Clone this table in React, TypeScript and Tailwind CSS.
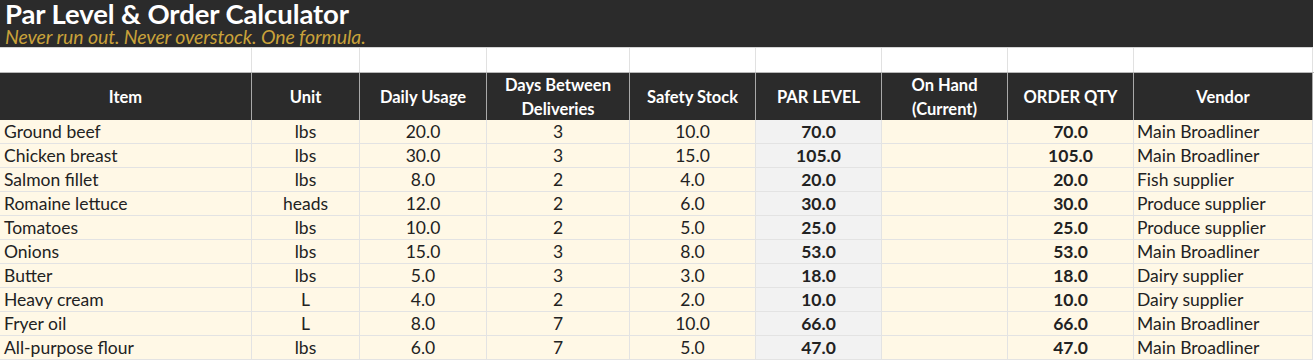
import React from 'react';

const cols = 'grid grid-cols-[252px_108px_127px_143px_126px_126px_126px_126px_179px]';

const headers = [
  'Item',
  'Unit',
  'Daily Usage',
  'Days Between Deliveries',
  'Safety Stock',
  'PAR LEVEL',
  'On Hand (Current)',
  'ORDER QTY',
  'Vendor',
];

const rows = [
  ['Ground beef', 'lbs', '20.0', '3', '10.0', '70.0', '70.0', 'Main Broadliner'],
  ['Chicken breast', 'lbs', '30.0', '3', '15.0', '105.0', '105.0', 'Main Broadliner'],
  ['Salmon fillet', 'lbs', '8.0', '2', '4.0', '20.0', '20.0', 'Fish supplier'],
  ['Romaine lettuce', 'heads', '12.0', '2', '6.0', '30.0', '30.0', 'Produce supplier'],
  ['Tomatoes', 'lbs', '10.0', '2', '5.0', '25.0', '25.0', 'Produce supplier'],
  ['Onions', 'lbs', '15.0', '3', '8.0', '53.0', '53.0', 'Main Broadliner'],
  ['Butter', 'lbs', '5.0', '3', '3.0', '18.0', '18.0', 'Dairy supplier'],
  ['Heavy cream', 'L', '4.0', '2', '2.0', '10.0', '10.0', 'Dairy supplier'],
  ['Fryer oil', 'L', '8.0', '7', '10.0', '66.0', '66.0', 'Main Broadliner'],
  ['All-purpose flour', 'lbs', '6.0', '7', '5.0', '47.0', '47.0', 'Main Broadliner'],
];

export default function App() {
  return (
    <div className="w-[1314px] h-[360px] overflow-hidden bg-white font-['Lato','Open_Sans',sans-serif] text-[#222]">
      {/* Title band */}
      <div className="w-[1313px] h-[48px] bg-[#2b2b2b] border-b border-[#d4d4d4] pl-[5px] pt-[1px] flex flex-col">
        <div className="text-white font-bold text-[27.5px] leading-[26px] tracking-[-0.1px]">
          Par Level &amp; Order Calculator
        </div>
        <div className="text-[#c9a23a] italic text-[19.5px] leading-[20px] tracking-[-0.1px]">
          Never run out. Never overstock. One formula.
        </div>
      </div>

      {/* Spacer row */}
      <div className={`${cols} h-[24px]`}>
        {headers.map((h) => (
          <div key={h} className="border-r border-[#e1e1e1] bg-white" />
        ))}
      </div>

      {/* Header row */}
      <div className={`${cols} h-[48px] border-t border-[#b8b8b8]`}>
        {headers.map((h) => (
          <div
            key={h}
            className="bg-[#2b2b2b] border-r border-b-2 border-[#a9a9a9] flex items-center justify-center text-center text-white font-bold text-[16.5px] leading-[24px] px-3"
          >
            {h}
          </div>
        ))}
      </div>

      {/* Data rows */}
      {rows.map((r) => (
        <div key={r[0]} className={`${cols} h-[24px] text-[17.5px] leading-[23px]`}>
          <div className="bg-[#fff8e6] border-r border-b border-[#e3e3e3] pl-[4px]">{r[0]}</div>
          <div className="bg-[#fff8e6] border-r border-b border-[#e3e3e3] text-center">{r[1]}</div>
          <div className="bg-[#fff8e6] border-r border-b border-[#e3e3e3] text-center">{r[2]}</div>
          <div className="bg-[#fff8e6] border-r border-b border-[#e3e3e3] text-center">{r[3]}</div>
          <div className="bg-[#fff8e6] border-r border-b border-[#e3e3e3] text-center">{r[4]}</div>
          <div className="bg-[#f2f2f2] border-r border-b border-[#e3e3e3] text-center font-bold">{r[5]}</div>
          <div className="bg-[#fff8e6] border-r border-b border-[#e3e3e3]" />
          <div className="bg-[#fff8e6] border-r border-b border-[#e3e3e3] text-center font-bold">{r[6]}</div>
          <div className="bg-[#fff8e6] border-r border-b border-[#e3e3e3] pl-[3px]">{r[7]}</div>
        </div>
      ))}
    </div>
  );
}
